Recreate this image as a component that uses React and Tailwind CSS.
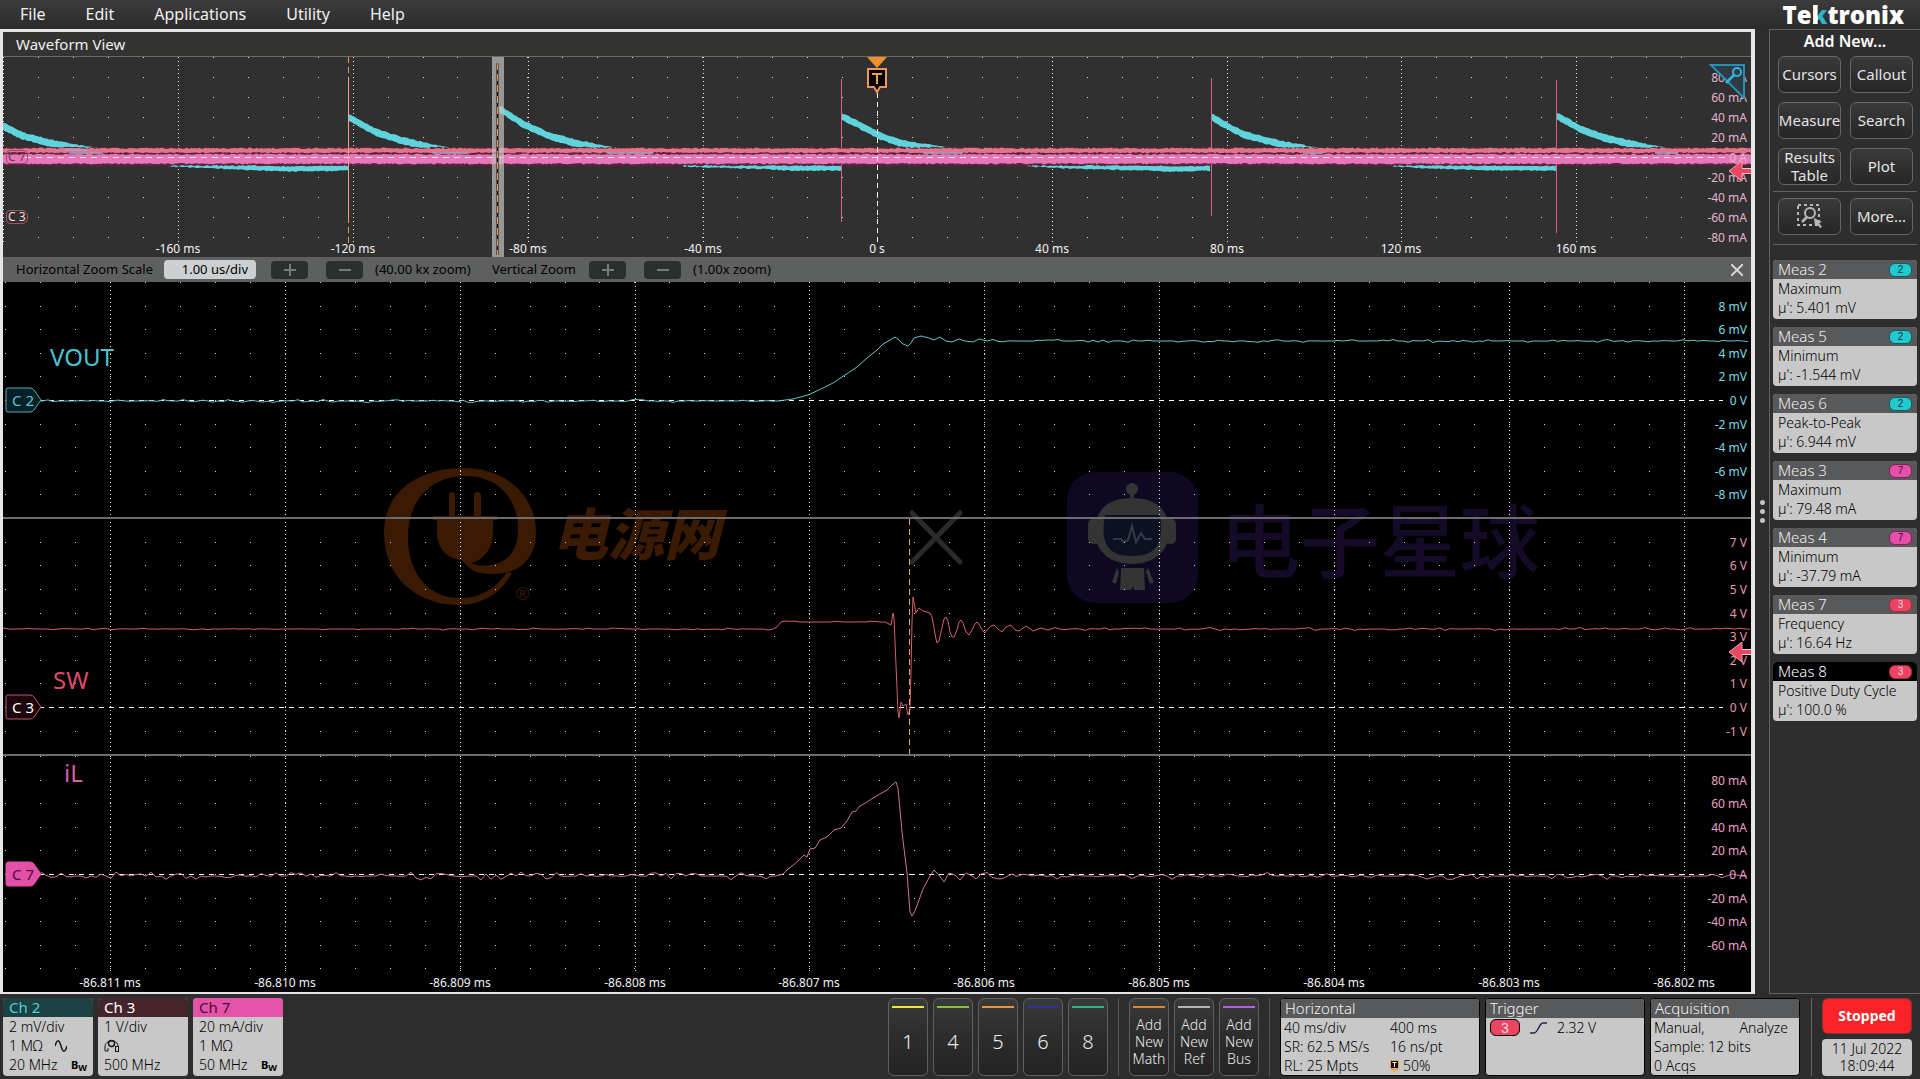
import clsx from "clsx";

const VIEW_W = 1748;
const OVERVIEW_H = 200;
const ZOOM_H = 710;

const CYAN = "#5fd3dc";

const menus = ["File", "Edit", "Applications", "Utility", "Help"];

const overviewTimes = [
  { x: 175, label: "-160 ms" },
  { x: 350, label: "-120 ms" },
  { x: 525, label: "-80 ms" },
  { x: 700, label: "-40 ms" },
  { x: 874, label: "0 s" },
  { x: 1049, label: "40 ms" },
  { x: 1224, label: "80 ms" },
  { x: 1398, label: "120 ms" },
  { x: 1573, label: "160 ms" },
];

const zoomTimes = [
  "-86.811 ms",
  "-86.810 ms",
  "-86.809 ms",
  "-86.808 ms",
  "-86.807 ms",
  "-86.806 ms",
  "-86.805 ms",
  "-86.804 ms",
  "-86.803 ms",
  "-86.802 ms",
].map((label, i) => ({ label, x: Math.round(107 + i * 174.85) }));

const overviewScale = [80, 60, 40, 20, 0, -20, -40, -60, -80].map((v, i) => ({
  label: v === 0 ? "0 A" : `${v} mA`,
  y: 21 + i * 20,
}));

const DIV = 23.6;

// Each pane knows where its zero level sits and which grid rows it covers.
const panes = [
  { zero: 118, from: -5, to: 4, unit: "mV", step: 2, labels: [4, -4], color: "text-[#7ddde3]" },
  { zero: 425, from: -8, to: 1, unit: "V", step: 1, labels: [7, -1], color: "text-[#e79aa8]" },
  { zero: 592, from: -5, to: 4, unit: "mA", step: 20, labels: [4, -3], color: "text-[#e9a3c6]" },
];

const zoomScale = panes.flatMap((pane) => {
  const rows = [];
  for (let n = pane.labels[0]; n >= pane.labels[1]; n--) {
    const zeroUnit = pane.unit === "mA" ? "A" : "V";
    rows.push({
      label: n === 0 ? `0 ${zeroUnit}` : `${n * pane.step} ${pane.unit}`,
      y: Math.round(pane.zero + 1 - n * DIV),
      color: pane.color,
    });
  }
  return rows;
});

const measurements = [
  { name: "Meas 2", kind: "Maximum", value: "5.401 mV", ch: 2 },
  { name: "Meas 5", kind: "Minimum", value: "-1.544 mV", ch: 2 },
  { name: "Meas 6", kind: "Peak-to-Peak", value: "6.944 mV", ch: 2 },
  { name: "Meas 3", kind: "Maximum", value: "79.48 mA", ch: 7 },
  { name: "Meas 4", kind: "Minimum", value: "-37.79 mA", ch: 7 },
  { name: "Meas 7", kind: "Frequency", value: "16.64 Hz", ch: 3 },
  { name: "Meas 8", kind: "Positive Duty Cycle", value: "100.0 %", ch: 3, active: true },
];

const chipColors = {
  2: "bg-[#22c9cf] border-[#0c5f66] text-[#07353a]",
  3: "bg-[#ec4562] border-[#a32a40] text-[#ffd5dc]",
  7: "bg-[#e44fa8] border-[#7d2259] text-[#4b0c33]",
};

const offChannels = [
  { n: 1, bar: "bg-[#f0e640]" },
  { n: 4, bar: "bg-[#8dbb3c]" },
  { n: 5, bar: "bg-[#e8934a]" },
  { n: 6, bar: "bg-[#33309a]" },
  { n: 8, bar: "bg-[#2fb58c]" },
];

const addButtons = [
  { label: "Math", bar: "bg-[#d98736]" },
  { label: "Ref", bar: "bg-[#b4b4b8]" },
  { label: "Bus", bar: "bg-[#b060d8]" },
];

// Small repeatable generator so the trace noise is the same on every render.
function makeNoise(seed) {
  let s = seed;
  return () => {
    s = (s * 16807) % 2147483647;
    return s / 2147483647;
  };
}

function flat(x0, x1, y, amp, seed, step = 5) {
  const rnd = makeNoise(seed);
  const pts = [];
  for (let x = x0; x <= x1; x += step) {
    const r = rnd() * 2 - 1;
    pts.push([x, (y + r * r * r * amp).toFixed(1)]);
  }
  return pts;
}

const toPath = (pts) => "M" + pts.map((p) => p.join(" ")).join("L");

const voutTrace = toPath([
  ...flat(30, 780, 119, 1.5, 11),
  [790, 117], [805, 113], [818, 107], [830, 101], [842, 93], [854, 85], [864, 76], [873, 69],
  [880, 62], [887, 58], [892, 55], [896, 58], [900, 62], [905, 64], [908, 61], [911, 56],
  [918, 54], [926, 56], [931, 58], [937, 55], [943, 59], [949, 60], [956, 57], [962, 59],
  [970, 60], [976, 57], [984, 59],
  ...flat(990, 1748, 59, 1.5, 29),
]);

const swTrace = toPath([
  ...flat(0, 773, 347, 1, 5),
  [774, 345], [778, 340],
  ...flat(782, 884, 340, 1, 8),
  [888, 343], [890, 331], [891, 336], [893, 383], [895, 430], [896, 436], [898, 420],
  [900, 424], [903, 422], [905, 433], [907, 428], [908, 390], [909, 340], [910, 315],
  [911, 321], [913, 331], [916, 326], [920, 329], [927, 331], [929, 335], [931, 346],
  [933, 357], [934, 361], [936, 359], [938, 350], [941, 337], [943, 335], [945, 339],
  [947, 350], [949, 355], [951, 355], [954, 348], [956, 340], [958, 338], [960, 341],
  [963, 350], [966, 353], [969, 348], [972, 342], [974, 340], [976, 342], [979, 348],
  [982, 351], [985, 347], [988, 344], [991, 343], [995, 347], [999, 350], [1003, 345],
  [1008, 343], [1012, 348], [1016, 349], [1023, 344], [1030, 349], [1038, 346], [1045, 348],
  ...flat(1052, 1748, 347, 1.5, 21),
]);

const ilTrace = toPath([
  ...flat(38, 776, 594, 4, 17),
  [780, 592], [784, 588], [789, 584], [795, 579], [801, 573], [804, 575], [807, 567],
  [812, 566], [817, 558], [824, 555], [831, 548], [838, 546], [844, 539], [849, 530],
  [853, 529], [857, 524], [864, 520], [870, 516], [877, 512], [884, 508], [889, 503],
  [893, 500], [895, 506], [899, 550], [904, 591], [907, 630], [909, 634], [912, 629],
  [920, 607], [927, 594], [931, 588], [935, 592], [941, 600], [946, 591], [952, 593],
  [957, 598], [963, 591], [969, 594], [973, 597], [978, 592],
  ...flat(984, 1748, 594, 3.5, 37),
]);

const decays = [
  [[0, 69], [17, 78], [47, 86], [72, 91], [110, 97]],
  [[345, 60], [372, 75], [397, 83], [430, 91], [460, 97]],
  [[495, 51], [520, 67], [546, 79], [572, 86], [602, 92], [640, 98]],
  [[838, 59], [860, 70], [877, 79], [897, 86], [925, 91], [960, 96]],
  [[1209, 60], [1224, 69], [1242, 78], [1277, 87], [1302, 92], [1330, 97]],
  [[1554, 59], [1577, 72], [1602, 81], [1645, 91], [1680, 97]],
];

const troughs = [
  [[165, 107], [217, 109], [260, 111], [285, 112], [345, 111]],
  [[680, 107], [747, 109], [790, 111], [838, 111]],
  [[1025, 107], [1070, 109], [1147, 111], [1170, 112], [1208, 111]],
  [[1390, 107], [1430, 109], [1490, 111], [1554, 111]],
];

function bandPath(y0, y1, seed) {
  const rnd = makeNoise(seed);
  let top = `M0 ${y0}`;
  let bottom = "";
  for (let x = 0; x <= VIEW_W; x += 2) {
    top += `L${x} ${(y0 - rnd() * 1.4).toFixed(1)}`;
    bottom = `L${x} ${(y1 + rnd() * 1.4).toFixed(1)}` + bottom;
  }
  return top + bottom + "Z";
}

// Thick trace with ragged edges, following the given points.
function fuzzyPath(pts, width, seed) {
  const rnd = makeNoise(seed);
  const end = pts[pts.length - 1][0];
  let top = "";
  let bottom = "";
  let i = 0;
  for (let x = pts[0][0]; x <= end; x += 2) {
    while (i < pts.length - 2 && x > pts[i + 1][0]) i++;
    const [xa, ya] = pts[i];
    const [xb, yb] = pts[i + 1];
    const y = ya + ((x - xa) / (xb - xa)) * (yb - ya);
    top += `${top ? "L" : "M"}${x} ${(y - width / 2 - rnd() * 1.2).toFixed(1)}`;
    bottom = `L${x} ${(y + width / 2 + rnd() * 1.2).toFixed(1)}` + bottom;
  }
  return top + bottom + "Z";
}

function dotPath(xs, ys) {
  return ys
    .map((y) => xs.map((x) => `M${Math.round(x)} ${Math.round(y)}h1v1h-1z`).join(""))
    .join("");
}

const range = (from, to) => Array.from({ length: to - from + 1 }, (_, i) => from + i);

const overviewDots = dotPath(
  range(0, 48).map((i) => i * 34.96),
  range(0, 9).map((i) => i * 20)
);

const zoomDots = panes
  .map((p) =>
    dotPath(
      range(0, 48).map((i) => 2 + i * 34.97),
      range(p.from, p.to).map((n) => p.zero + n * DIV)
    )
  )
  .join("");

function pct(v, total) {
  return `${(v / total) * 100}%`;
}

function AxisLabels({ times, scale, height, timeClass, scaleClass }) {
  return (
    <>
      {times.map((t) => (
        <span
          key={t.label}
          className={clsx("absolute -translate-x-1/2 text-xs leading-4 text-[#f2f2f2] whitespace-nowrap", timeClass)}
          style={{ left: pct(t.x, VIEW_W) }}
        >
          {t.label}
        </span>
      ))}
      {scale.map((s, i) => (
        <span
          key={i}
          className={clsx(
            "absolute right-1 -translate-y-1/2 text-xs leading-4 whitespace-nowrap",
            s.color || scaleClass
          )}
          style={{ top: pct(s.y, height) }}
        >
          {s.label}
        </span>
      ))}
    </>
  );
}

function TriggerArrow({ y, height }) {
  return (
    <svg
      className="absolute right-0 h-[22px] w-[23px] -translate-y-1/2"
      viewBox="0 0 23 22"
      style={{ top: pct(y, height) }}
    >
      <path d="M1 11L14 1V9H23V13H14V21Z" fill="#ea4763" />
      <path d="M14 8.5H23M14 13.5H23" stroke="#f6c9d2" strokeWidth="1" />
      <path d="M1 11L14 1V8M14 14V21L1 11" fill="none" stroke="#f3a0b0" strokeWidth="1" />
    </svg>
  );
}

function OverviewPlot() {
  return (
    <div className="relative h-[200px] overflow-hidden bg-[#303030]">
      <svg
        className="absolute inset-0 h-full w-full"
        viewBox={`0 0 ${VIEW_W} ${OVERVIEW_H}`}
        preserveAspectRatio="none"
      >
        <path d={overviewDots} fill="#d8d8d8" shapeRendering="crispEdges" />
        <g stroke="#e6e6e6" strokeDasharray="1 3" shapeRendering="crispEdges">
          <path d="M0.5 0V186" />
          {overviewTimes
            .filter((t) => t.label !== "0 s")
            .map((t) => (
              <path key={t.x} d={`M${t.x + 0.5} 0V186`} />
            ))}
        </g>

        <g fill={CYAN}>
          {decays.map((d, i) => (
            <path key={i} d={fuzzyPath(d, 6, 13 + i)} />
          ))}
          {troughs.map((d, i) => (
            <path key={i} d={fuzzyPath(d, 4, 31 + i)} />
          ))}
        </g>
        <path d={bandPath(91, 108, 7)} fill="#5d2440" />
        <path d={bandPath(92, 95, 3)} fill="#e3758a" />
        <path d={bandPath(98, 106, 9)} fill="#e678b8" />
        <g fill="none" stroke="#a9a2c8" strokeWidth="2" opacity="0.8">
          <path d="M62 93H84M66 96H100M430 96H465M604 96H650M920 96H960M1300 96H1320M1652 96H1675" />
        </g>
        <path d="M22 100.5H1722" stroke="#fbe9f5" strokeDasharray="6 5" shapeRendering="crispEdges" />

        <g fill="none" strokeWidth="1" shapeRendering="crispEdges">
          <path d="M345.5 0V186" stroke="#e8964a" strokeDasharray="6 4" />
          <path d="M345.5 20V160" stroke="#f0a08c" />
          <path d="M838.5 22V91M838.5 107V165" stroke="#e0608a" />
          <path d="M1208.5 21V91M1208.5 107V159" stroke="#e0608a" />
          <path d="M1553.5 23V91M1553.5 107V176" stroke="#e0608a" />
          <path d="M874.5 36V186" stroke="#f4f4f4" strokeDasharray="5 4" />
        </g>

        <rect x="489" y="0" width="12" height="200" fill="#c2bebe" opacity="0.72" />
        <path d="M494.5 6V198" stroke="#111" strokeWidth="2" />
        <path d="M494.5 6V198" stroke="#e8964a" strokeWidth="1" strokeDasharray="7 4" />

        <path d="M864 0H884L874 11Z" fill="#f0902c" />
        <path d="M865 12H883V30H877L874 35L871 30H865Z" fill="#000" stroke="#f0965a" strokeWidth="2" />
        <path d="M869 17H879M874 17V27" stroke="#f0a050" strokeWidth="2" />
      </svg>

      <AxisLabels
        times={overviewTimes}
        scale={overviewScale}
        height={OVERVIEW_H}
        timeClass="bottom-0"
        scaleClass="text-[#e6b3d0]"
      />

      <span className="absolute left-[3px] top-[93px] rounded-sm border border-[#a8437a] px-px text-xs leading-3 text-[#7a2f5c]">
        C 7
      </span>
      <span className="absolute left-[3px] top-[153px] rounded-md rounded-l-sm border border-[#a85262] px-px text-xs leading-3 text-[#f3dfe2]">
        C 3
      </span>

      <TriggerArrow y={114} height={OVERVIEW_H} />

      <button type="button" aria-label="Zoom" className="absolute right-[6px] top-[6px] h-9 w-9">
        <svg viewBox="0 0 36 36" className="h-full w-full">
          <path d="M2 2H35V35Z" fill="#303a42" stroke="#2391b8" strokeWidth="2" />
          <circle cx="28" cy="9" r="4" fill="none" stroke="#35b4dc" strokeWidth="2" />
          <path d="M25 12L17 20" stroke="#35b4dc" strokeWidth="2.5" />
        </svg>
      </button>
    </div>
  );
}

function ZoomStep({ sign, label }) {
  return (
    <button
      type="button"
      aria-label={label}
      className="flex h-[18px] w-[37px] items-center justify-center rounded-sm bg-[#2d2e2e]"
    >
      <svg viewBox="0 0 12 12" className="h-3 w-3" stroke="#77797a" strokeWidth="2">
        <path d={sign === "+" ? "M0 6H12M6 0V12" : "M0 6H12"} />
      </svg>
    </button>
  );
}

function ZoomBar() {
  return (
    <div className="flex h-[25px] items-center bg-[#5e605f] pl-[13px] pr-2 text-[13px] text-black">
      <label htmlFor="hscale" className="w-[148px] whitespace-nowrap">
        Horizontal Zoom Scale
      </label>
      <input
        id="hscale"
        type="text"
        defaultValue="1.00 us/div"
        className="h-[19px] w-[92px] rounded-sm bg-[#cdd0d2] pr-2 text-right text-[13px]"
      />
      <div className="ml-[15px] flex gap-[18px]">
        <ZoomStep sign="+" label="Increase horizontal zoom" />
        <ZoomStep sign="-" label="Decrease horizontal zoom" />
      </div>
      <span className="ml-3 w-[117px] whitespace-nowrap">(40.00 kx zoom)</span>
      <span className="w-[97px] whitespace-nowrap">Vertical Zoom</span>
      <div className="flex gap-[18px]">
        <ZoomStep sign="+" label="Increase vertical zoom" />
        <ZoomStep sign="-" label="Decrease vertical zoom" />
      </div>
      <span className="ml-3">(1.00x zoom)</span>
      <button type="button" aria-label="Close zoom" className="ml-auto">
        <svg viewBox="0 0 12 12" className="h-3 w-3" stroke="#d4d4d4" strokeWidth="2">
          <path d="M0 0L12 12M12 0L0 12" />
        </svg>
      </button>
    </div>
  );
}

function Watermark() {
  return (
    <g aria-hidden="true">
      <g fill="#3a1a02">
        <path
          fillRule="evenodd"
          d="M509 291C500 308 482 323 456 323C416 323 381 298 381 250C381 210 415 186 461 186C504 186 533 215 533 250C533 275 518 292 490 292C474 292 466 288 460 279C443 276 434 266 434 250V238H430V234H446V213C446 209 452 209 452 213V234H471V213C471 209 478 209 478 213V234H494V238H490V250C490 266 481 278 468 281C474 284 480 284 487 283C505 281 515 268 515 247C515 215 493 194 463 194C426 194 405 220 405 255C405 292 426 317 459 316C479 316 495 304 504 290Z"
        />
        <text x="549" y="273" fontSize="56" fontWeight="900" fontStyle="italic" fontFamily="Noto Sans CJK SC, sans-serif">
          电源网
        </text>
        <text x="513" y="318" fontSize="18" fontFamily="Liberation Sans, sans-serif">
          ®
        </text>
      </g>
      <path d="M909 231L957 280M957 231L909 280" stroke="#2a2a2a" strokeWidth="5" strokeLinecap="round" />
      <rect x="1064" y="190" width="131" height="131" rx="28" fill="#0f0822" />
      <g fill="#343434">
        <circle cx="1129" cy="207" r="6" />
        <path d="M1127 212H1131V218H1127Z" />
        <rect x="1085" y="237" width="12" height="25" rx="5" />
        <rect x="1161" y="237" width="12" height="25" rx="5" />
        <path d="M1092 250C1092 225 1108 216 1129 216S1166 225 1166 250C1166 270 1150 282 1129 282S1092 270 1092 250Z" />
        <path d="M1118 286H1141L1142 308H1131L1130 304L1128 308H1117ZM1114 286L1109 300L1113 302L1116 290ZM1145 286L1151 300L1147 302L1143 290Z" />
      </g>
      <path d="M1102 233H1157C1161 262 1153 274 1129 274S1097 262 1102 233Z" fill="#0b1122" />
      <path
        d="M1110 257H1118L1121 260L1125 258L1129 244L1133 260L1138 251L1142 257H1149"
        fill="none"
        stroke="#343a44"
        strokeWidth="2"
      />
      <text x="1217" y="289" fontSize="80" fontWeight="500" fill="#150a28" fontFamily="Noto Sans CJK SC, sans-serif">
        电子星球
      </text>
    </g>
  );
}

function ChannelFlag({ label, y, fill, stroke, textClass }) {
  return (
    <div className="absolute left-[2px] h-[26px] w-[38px] -translate-y-1/2" style={{ top: pct(y, ZOOM_H) }}>
      <svg viewBox="0 0 38 26" className="absolute inset-0 h-full w-full">
        <path d="M3 1H25Q28 1 29 3L36 13L29 23Q28 25 25 25H3Q1 25 1 23V3Q1 1 3 1Z" fill={fill} stroke={stroke} />
      </svg>
      <span className={clsx("relative block pl-[7px] text-[15px] leading-[26px] whitespace-nowrap", textClass)}>
        {label}
      </span>
    </div>
  );
}

function ZoomPlot() {
  return (
    <div className="relative min-h-[600px] flex-1 overflow-hidden bg-black">
      <svg
        className="absolute inset-0 h-full w-full"
        viewBox={`0 0 ${VIEW_W} ${ZOOM_H}`}
        preserveAspectRatio="none"
      >
        <Watermark />
        <path d={zoomDots} fill="#d0d0d0" shapeRendering="crispEdges" />
        <g stroke="#e2e2e2" strokeDasharray="1 3" shapeRendering="crispEdges">
          {zoomTimes.map((t) => (
            <path key={t.x} d={`M${t.x + 0.5} 0V692`} />
          ))}
        </g>
        <path d="M0 236H1748M0 473H1748" stroke="#6e6c6e" strokeWidth="2" shapeRendering="crispEdges" />
        <g stroke="#fff" strokeDasharray="5 5" shapeRendering="crispEdges">
          {panes.map((p) => (
            <path key={p.zero} d={`M36 ${p.zero + 0.5}H1720`} />
          ))}
        </g>
        <g fill="none" strokeWidth="1">
          <path d={voutTrace} stroke="#62c3cc" />
          <path d={swTrace} stroke="#d0606c" />
          <path d={ilTrace} stroke="#cf7099" />
          <path d="M906.5 237V472" stroke="#e8a860" strokeDasharray="6 4" shapeRendering="crispEdges" />
        </g>
      </svg>

      <AxisLabels times={zoomTimes} scale={zoomScale} height={ZOOM_H} timeClass="bottom-px" />

      <span
        className="absolute left-[47px] -translate-y-1/2 text-2xl text-[#4cc4cc]"
        style={{ top: pct(75, ZOOM_H) }}
      >
        VOUT
      </span>
      <span
        className="absolute left-[50px] -translate-y-1/2 text-2xl text-[#dd4c68]"
        style={{ top: pct(398, ZOOM_H) }}
      >
        SW
      </span>
      <span
        className="absolute left-[61px] -translate-y-1/2 text-2xl text-[#dd5ca4]"
        style={{ top: pct(491, ZOOM_H) }}
      >
        iL
      </span>

      <ChannelFlag label="C 2" y={118} fill="#062127" stroke="#5fa7b2" textClass="text-[#5fc4cc]" />
      <ChannelFlag label="C 3" y={425} fill="#1d060b" stroke="#b85a6c" textClass="text-white" />
      <ChannelFlag label="C 7" y={592} fill="#e44fa8" stroke="#e44fa8" textClass="text-[#4b0c33]" />

      <TriggerArrow y={370} height={ZOOM_H} />
    </div>
  );
}

function SideButton({ children, label }) {
  return (
    <button
      type="button"
      aria-label={label}
      className="flex h-[37px] w-[63px] items-center justify-center rounded-md border border-[#666] bg-linear-to-b from-[#3a3a3a] to-[#262626] pb-px text-[15px] leading-[18px] whitespace-nowrap text-[#e4e4e4]"
    >
      {children}
    </button>
  );
}

function ChannelChip({ ch, className }) {
  return (
    <span
      className={clsx(
        "flex items-center justify-center border font-['Liberation_Sans'] leading-none",
        chipColors[ch],
        className
      )}
    >
      {ch}
    </span>
  );
}

function MeasCard({ meas }) {
  return (
    <div className="h-[59px] overflow-hidden rounded bg-[#c8c8c8] text-sm leading-[19px] font-light text-black">
      <div
        className={clsx(
          "flex h-[19px] items-center justify-between px-[5px] text-[15px]",
          meas.active ? "bg-black text-white" : "bg-[#58595a] text-[#f0f0f0]"
        )}
      >
        {meas.name}
        <ChannelChip ch={meas.ch} className="h-[14px] w-[23px] rounded-md text-[10px]" />
      </div>
      <div className="px-[5px] whitespace-nowrap">{meas.kind}</div>
      <div className="px-[5px] whitespace-nowrap">µ': {meas.value}</div>
    </div>
  );
}

function Sidebar() {
  return (
    <aside className="flex w-[151px] shrink-0 flex-col border-b border-l border-[#626262] bg-[#2e2e2e]">
      <h2 className="h-[27px] border-t border-[#626262] text-center text-base leading-[22px] font-semibold text-white">
        Add New...
      </h2>
      <div className="grid grid-cols-[63px_63px] gap-x-[9px] gap-y-[9px] pl-2">
        <SideButton>Cursors</SideButton>
        <SideButton>Callout</SideButton>
        <SideButton>Measure</SideButton>
        <SideButton>Search</SideButton>
        <SideButton>
          Results
          <br />
          Table
        </SideButton>
        <SideButton>Plot</SideButton>
      </div>
      <div className="mx-[3px] my-[6px] h-px bg-[#626262]" />
      <div className="flex gap-[9px] pl-2">
        <SideButton label="Zoom area">
          <svg viewBox="0 0 26 26" className="h-[26px] w-[26px]" fill="none" stroke="#b8b8b8">
            <rect x="1" y="2" width="21" height="20" strokeWidth="2" strokeDasharray="3 3" />
            <circle cx="13" cy="10" r="5" strokeWidth="2" />
            <path d="M10 14L5 19" strokeWidth="2.5" />
            <path d="M17 15L25 19L22 20L25 24L23 25L20 21L18 23Z" fill="#b8b8b8" stroke="none" />
          </svg>
        </SideButton>
        <SideButton>More...</SideButton>
      </div>
      <div className="mx-[3px] mt-[9px] mb-[15px] h-px bg-[#626262]" />
      <div className="flex flex-col gap-2 px-[3px]">
        {measurements.map((m) => (
          <MeasCard key={m.name} meas={m} />
        ))}
      </div>
    </aside>
  );
}

function ChannelCard({ name, headClass, children }) {
  return (
    <div className="h-[78px] w-[90px] overflow-hidden rounded bg-[#c8c8c8] text-sm leading-[19px] font-light text-black">
      <div className={clsx("h-[19px] px-[6px] text-[15px] font-normal", headClass)}>{name}</div>
      <div className="flex flex-col px-[6px] whitespace-nowrap">{children}</div>
    </div>
  );
}

function Bandwidth() {
  return (
    <span className="text-[11px] leading-none font-bold">
      B<sub className="text-[9px]">W</sub>
    </span>
  );
}

function InfoCard({ title, className, children }) {
  return (
    <div
      className={clsx(
        "h-[78px] overflow-hidden rounded border border-black bg-[#c8c8c8] text-sm leading-[19px] font-light text-black",
        className
      )}
    >
      <div className="h-[19px] bg-[#58595a] px-1 text-[15px] text-[#f4f4f4]">{title}</div>
      <div className="px-[3px] whitespace-nowrap">{children}</div>
    </div>
  );
}

function StripButton({ bar, className, children }) {
  return (
    <button
      type="button"
      className={clsx(
        "flex h-[78px] w-10 flex-col items-center rounded-md border border-[#606060] bg-linear-to-b from-[#3a3a3a] via-[#2c2c2c] to-[#232323] pt-[7px] font-light text-[#ececec]",
        className
      )}
    >
      <span className={clsx("h-[2px] w-8 shrink-0", bar)} />
      <span className="flex flex-1 flex-col items-center justify-center">{children}</span>
    </button>
  );
}

function BottomBar() {
  return (
    <footer className="flex h-[85px] shrink-0 items-start bg-[#2d2d2d] pt-1 pr-2 pl-[3px]">
      <div className="flex gap-[5px]">
        <ChannelCard name="Ch 2" headClass="bg-[#1c4143] text-[#4fd0d0]">
          <span>2 mV/div</span>
          <span className="flex items-center gap-3">
            1 MΩ
            <svg viewBox="0 0 12 12" className="h-3 w-3" fill="none" stroke="#161616" strokeWidth="1.5">
              <path d="M0 6C2 -1 4 -1 6 6S10 13 12 6" />
            </svg>
          </span>
          <span className="flex items-center justify-between">
            20 MHz <Bandwidth />
          </span>
        </ChannelCard>
        <ChannelCard name="Ch 3" headClass="bg-[#45242b] text-white">
          <span>1 V/div</span>
          <span className="flex h-[19px] items-center">
            <svg viewBox="0 0 16 13" className="h-[13px] w-4" fill="none" stroke="#161616">
              <circle cx="7.5" cy="4.500" r="3" strokeWidth="1.5" />
              <path d="M1 12V8C1 0 14 0 14 7M1 12H4V9" />
              <rect x="11.500" y="7.500" width="3" height="5" />
            </svg>
          </span>
          <span>500 MHz</span>
        </ChannelCard>
        <ChannelCard name="Ch 7" headClass="bg-[#e353a8] text-[#4b0c33]">
          <span>20 mA/div</span>
          <span>1 MΩ</span>
          <span className="flex items-center justify-between">
            50 MHz <Bandwidth />
          </span>
        </ChannelCard>
      </div>

      <div className="ml-auto flex">
        <div className="flex gap-[5px]">
          {offChannels.map((c) => (
            <StripButton key={c.n} bar={c.bar} className="text-xl">
              {c.n}
            </StripButton>
          ))}
        </div>
        <div className="mx-[10px] h-[78px] w-px bg-[#555]" />
        <div className="flex gap-[5px]">
          {addButtons.map((b) => (
            <StripButton key={b.label} bar={b.bar} className="text-sm leading-[17px]">
              <span>Add</span>
              <span>New</span>
              <span>{b.label}</span>
            </StripButton>
          ))}
        </div>
        <div className="mx-[10px] h-[78px] w-px bg-[#555]" />
        <div className="flex gap-[5px]">
          <InfoCard title="Horizontal" className="w-[200px]">
            <div className="grid grid-cols-[106px_1fr]">
              <span>40 ms/div</span>
              <span>400 ms</span>
              <span>SR: 62.5 MS/s</span>
              <span>16 ns/pt</span>
              <span>RL: 25 Mpts</span>
              <span className="flex items-center gap-1">
                <svg viewBox="0 0 9 12" className="h-3 w-[9px]">
                  <path d="M0 0H9V9L4.500 12L0 9Z" fill="#e8a060" />
                  <path d="M1 1H8V8H1Z" fill="#111" />
                  <path d="M2.500 2.500H6.500M4.500 2.500V7" stroke="#fff" />
                </svg>
                50%
              </span>
            </div>
          </InfoCard>
          <InfoCard title="Trigger" className="w-[160px]">
            <div className="flex items-center pl-px">
              <ChannelChip ch={3} className="h-[17px] w-[30px] rounded-md border-black text-sm" />
              <svg viewBox="0 0 17 12" className="mx-[10px] h-3 w-[17px]" fill="none" stroke="#26264a" strokeWidth="1.5">
                <path d="M0 11H4C8 11 9 1 13 1H17" />
              </svg>
              2.32 V
            </div>
          </InfoCard>
          <InfoCard title="Acquisition" className="w-[150px]">
            <div className="flex justify-between pr-2">
              <span>Manual,</span>
              <span>Analyze</span>
            </div>
            <div>Sample: 12 bits</div>
            <div>0 Acqs</div>
          </InfoCard>
        </div>
        <div className="mr-[10px] ml-[11px] h-[78px] w-px bg-[#666]" />
        <div className="flex w-[90px] flex-col gap-[5px] text-center">
          <button
            type="button"
            className="h-9 rounded-md border border-[#8a3034] bg-[#fb2228] text-sm font-bold text-white"
          >
            Stopped
          </button>
          <div className="h-[37px] rounded bg-[#c8c8c8] py-px text-sm leading-[17px] font-light text-black">
            <div>11 Jul 2022</div>
            <div>18:09:44</div>
          </div>
        </div>
      </div>
    </footer>
  );
}

export default function App() {
  return (
    <div className="flex h-screen min-h-[780px] flex-col bg-[#2d2d2d] font-['Noto_Sans',sans-serif]">
      <header className="flex h-[29px] shrink-0 items-center justify-between bg-linear-to-b from-[#3c3c3c] to-[#2b2b2b] pr-4 pl-5">
        <nav className="flex gap-10">
          {menus.map((m) => (
            <button key={m} type="button" className="text-base leading-[29px] text-[#f0f0f0]">
              {m}
            </button>
          ))}
        </nav>
        <div className="font-['Open_Sans',sans-serif] text-2xl leading-[29px] font-extrabold text-white">
          Te
          <span className="bg-[linear-gradient(90deg,#fff_38%,#2fb4c8_38%)] bg-clip-text text-transparent">k</span>
          tronix
        </div>
      </header>

      <div className="flex min-h-0 flex-1">
        <main className="flex min-w-0 flex-1 flex-col border-3 border-r-4 border-b-2 border-[#e6e4e6]">
          <h1 className="h-[25px] border-b border-[#6a6a6a] bg-[#333331] pl-[13px] text-[15px] leading-[25px] text-[#f0f0f0]">
            Waveform View
          </h1>
          <OverviewPlot />
          <ZoomBar />
          <ZoomPlot />
        </main>

        <div className="flex w-[14px] shrink-0 flex-col items-center justify-center gap-1">
          {[0, 1, 2].map((i) => (
            <span key={i} className="h-[5px] w-[5px] rounded-full bg-[#c4c4c4]" />
          ))}
        </div>

        <Sidebar />
      </div>

      <BottomBar />
    </div>
  );
}
